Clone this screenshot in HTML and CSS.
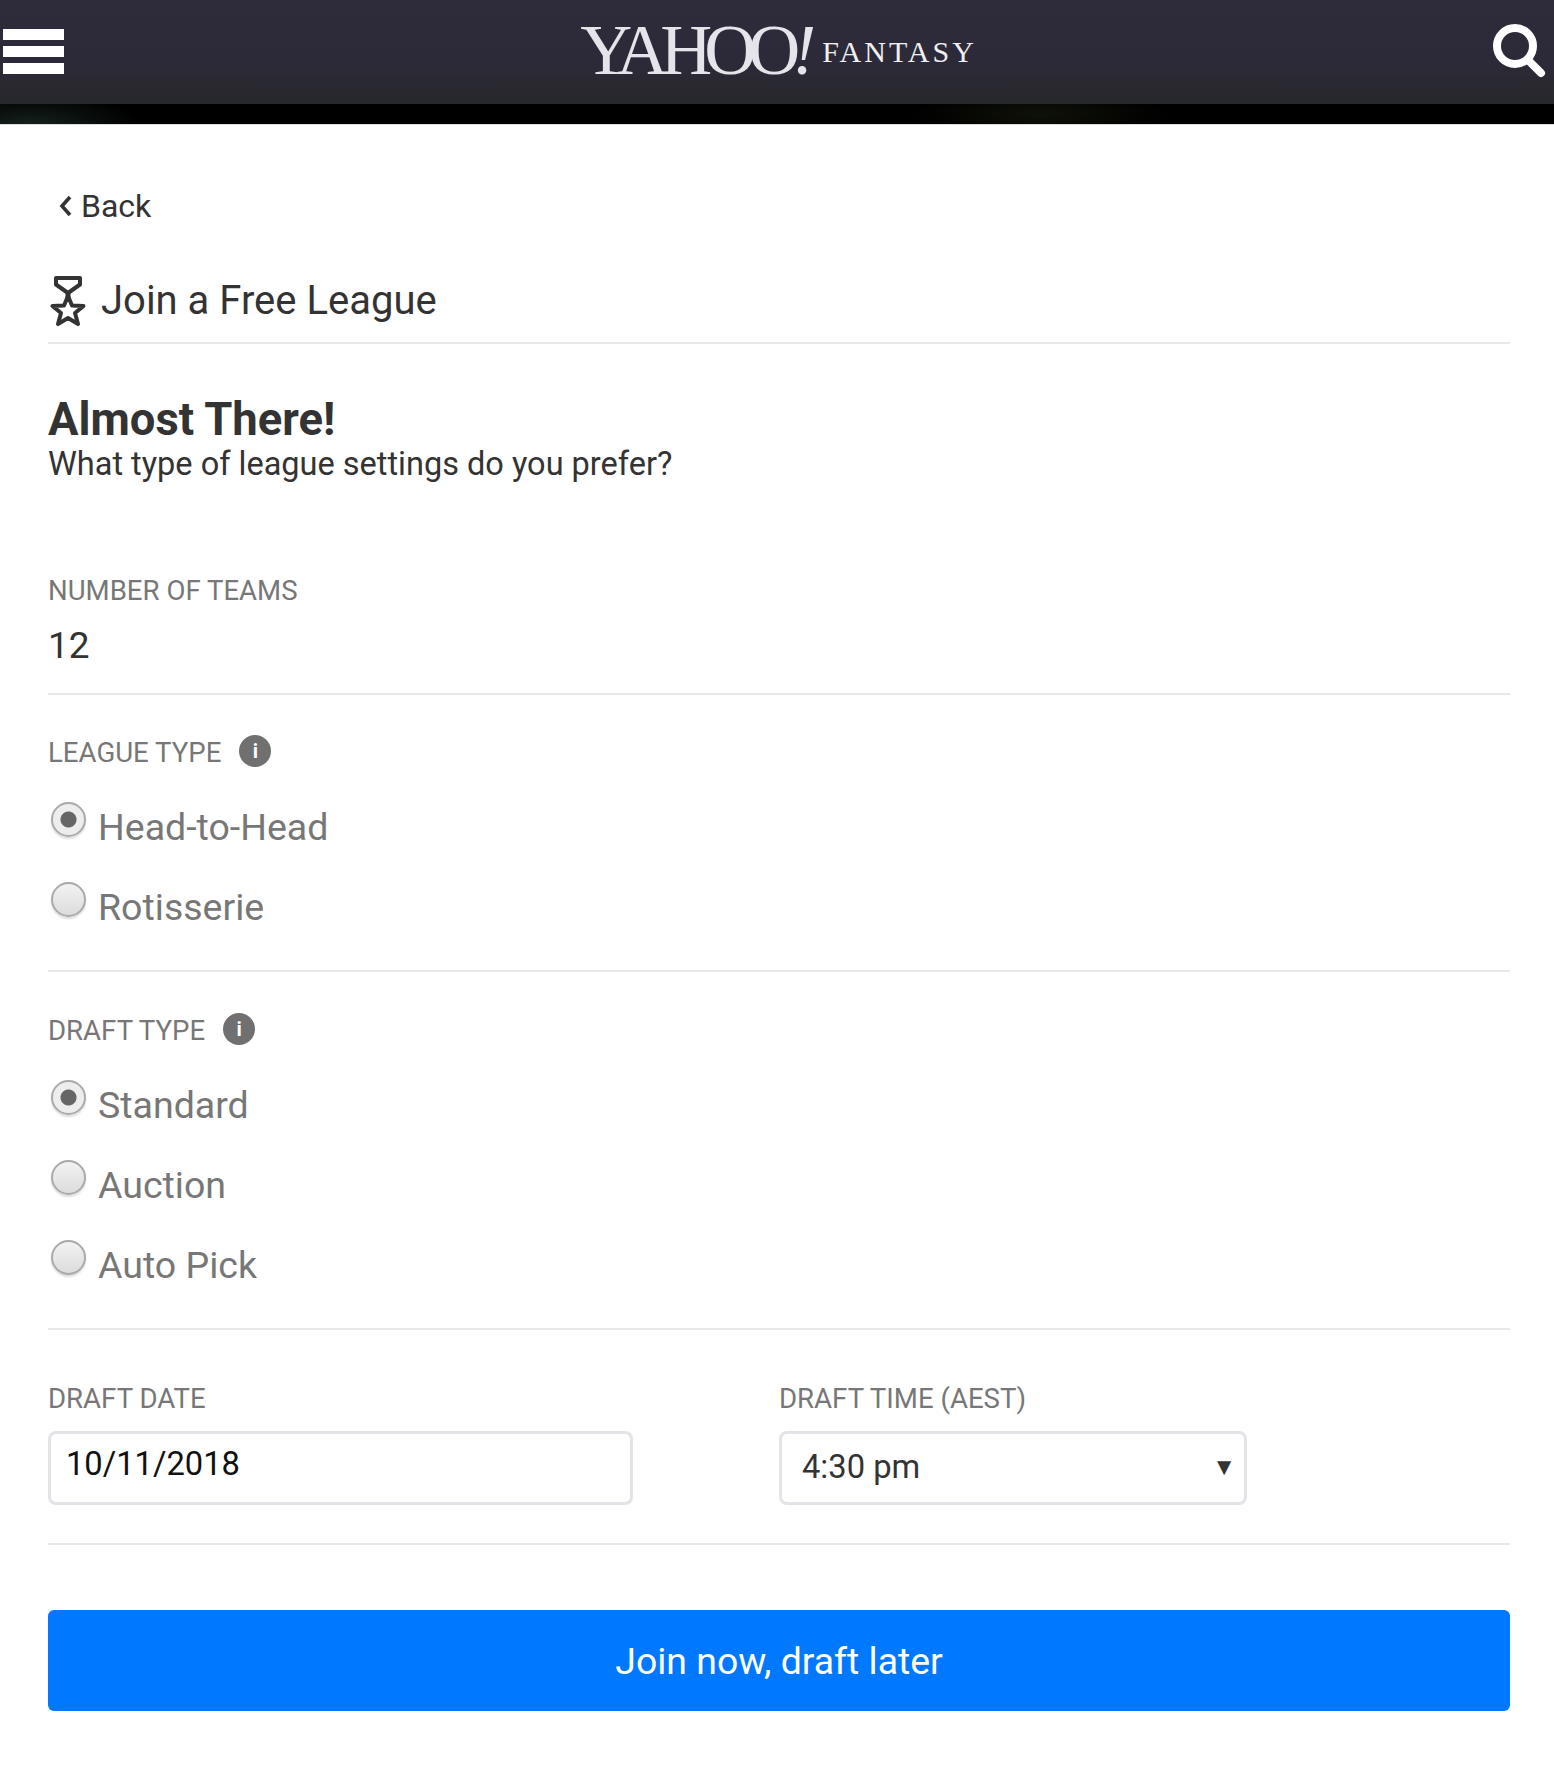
FILE: index.html
```html
<!DOCTYPE html>
<html lang="en">
<head>
<meta charset="utf-8">
<title>Join a Free League</title>
<link rel="stylesheet" href="styles.css">
</head>
<body>
<header class="topbar">
  <div class="menu"><span></span><span></span><span></span></div>
  <div class="logo"><span class="yahoo">YAHOO<i>!</i></span><span class="fantasy">FANTASY</span></div>
  <svg class="search" width="56" height="64" viewBox="0 0 56 64"><circle cx="24" cy="26" r="18" fill="none" stroke="#fff" stroke-width="8"/><path d="M37 40L50 53" stroke="#fff" stroke-width="8" stroke-linecap="round"/></svg>
</header>
<div class="band"></div>
<main class="content">
  <a class="back"><svg width="13" height="22" viewBox="0 0 13 22"><path d="M11 2L3 11l8 9" fill="none" stroke="#333" stroke-width="3.6"/></svg>Back</a>
  <div class="title">
    <svg width="36" height="52" viewBox="0 0 36 52"><path d="M6 3H30V9.500L18 18 6 9.500Z" fill="none" stroke="#333" stroke-width="4" stroke-linejoin="round"/><path d="M18 17V23" stroke="#333" stroke-width="5"/><path d="M18 21L22 30.500L33.500 31L25 38L28 49L18 43L8 49L11 38L2.500 31L14 30.500Z" fill="none" stroke="#333" stroke-width="4" stroke-linejoin="round"/></svg>
    <h1>Join a Free League</h1>
  </div>
  <h2>Almost There!</h2>
  <p class="sub">What type of league settings do you prefer?</p>

  <section class="row teams">
    <div class="label">NUMBER OF TEAMS</div>
    <div class="value">12</div>
  </section>

  <section class="row group">
    <div class="label">LEAGUE TYPE <span class="info">i</span></div>
    <label class="opt"><input type="radio" name="league" checked><span>Head-to-Head</span></label>
    <label class="opt"><input type="radio" name="league"><span>Rotisserie</span></label>
  </section>

  <section class="row group">
    <div class="label">DRAFT TYPE <span class="info">i</span></div>
    <label class="opt"><input type="radio" name="draft" checked><span>Standard</span></label>
    <label class="opt"><input type="radio" name="draft"><span>Auction</span></label>
    <label class="opt"><input type="radio" name="draft"><span>Auto Pick</span></label>
  </section>

  <section class="row dates">
    <div>
      <div class="label">DRAFT DATE</div>
      <div class="field date">10/11/2018</div>
    </div>
    <div>
      <div class="label">DRAFT TIME (AEST)</div>
      <div class="field time"><span>4:30 pm</span><em>▼</em></div>
    </div>
  </section>

  <button class="join">Join now, draft later</button>
</main>
</body>
</html>
```
FILE: styles.css
```css
* { box-sizing: border-box; }
html, body { margin: 0; padding: 0; background: #fff; }
body { font-family: Roboto, "Liberation Sans", sans-serif; color: #333; height: 1767px; overflow: hidden; }

.topbar {
  height: 104px;
  background: linear-gradient(#2e2b3b 0, #2c2a38 60%, #27282b 100%);
  display: flex;
  align-items: center;
  justify-content: space-between;
  padding: 0 0 0 3px;
}
.menu { width: 61px; display: flex; flex-direction: column; gap: 6px; margin-top: -2px; }
.menu span { display: block; height: 11px; background: #fff; }
.logo { display: flex; align-items: center; color: #e4e4ea; font-family: "Liberation Serif", serif; margin-left: 2px; }
.yahoo { font-size: 72px; letter-spacing: -8px; line-height: 100px; margin-top: -4px; }
.yahoo i { font-style: italic; letter-spacing: 0; }
.fantasy { font-size: 30px; letter-spacing: 3px; margin-left: 6px; color: #f0f0f3; }
.search { margin-right: 7px; flex: none; }

.band {
  height: 21px;
  background:
    radial-gradient(ellipse 110px 30px at 30px 20px, #14201d, transparent),
    radial-gradient(ellipse 130px 24px at 1040px 10px, #0f1208, transparent),
    #000;
  border-bottom: 1px solid #ddd;
}

.content { padding: 0 44px 0 48px; }

.back { display: flex; align-items: center; gap: 9px; font-size: 32px; line-height: 38px; margin: 62px 0 0 11px; color: #333; height: 38px; }
.title { display: flex; align-items: center; gap: 15px; margin-top: 49px; padding: 0 0 14px 2px; border-bottom: 2px solid #e8e8e8; height: 70px; }
.title svg { flex: none; }
.title h1 { font-size: 40px; font-weight: 400; margin: 0; line-height: 44px; }

h2 { font-size: 45.400px; font-weight: 700; margin: 51px 0 0; line-height: 50px; color: #333; }
.sub { font-size: 32.5px; line-height: 38px; margin: 0; color: #333; }

.row { border-bottom: 2px solid #e8e8e8; }
.label { font-size: 27.6px; line-height: 32px; color: #777; display: flex; align-items: center; gap: 18px; }
.info { width: 32px; height: 32px; border-radius: 50%; background: #707070; color: #fff; font-size: 20px; font-weight: 700; display: flex; align-items: center; justify-content: center; margin-top: -4px; }

.teams { margin-top: 92px; height: 120px; }
.value { font-size: 37px; line-height: 44px; margin-top: 17px; color: #333; }

.group { padding: 42px 0 23px; }
.group + .group { padding: 43px 0 23px; }
.group .label { margin-bottom: 18px; }
.opt { display: flex; align-items: center; height: 80px; gap: 12px; color: #777; font-size: 37.5px; margin-left: 3px; }
.opt input { appearance: none; -webkit-appearance: none; width: 35px; height: 35px; margin: -16px 0 0 0; border-radius: 50%; border: 2px solid #aaa; background: linear-gradient(#f2f2f2, #dcdcdc); box-shadow: 0 2px 2px #ddd; flex: none; }
.opt input:checked { background: radial-gradient(circle, #666 0, #666 7.500px, #ededed 8.500px); }
.opt span { line-height: 44px; }

.dates { display: grid; grid-template-columns: 50% 50%; padding-top: 53px; height: 215px; }
.field { height: 74px; margin-top: 16px; border: 3px solid #e4e4e8; border-radius: 8px; font-size: 32.7px; color: #111; }
.date { width: 585px; padding: 10px 0 0 15px; line-height: 40px; }
.time { width: 468px; display: flex; align-items: center; justify-content: space-between; padding: 0 8px 2px 20px; color: #333; }
.time em { font-style: normal; font-size: 24px; color: #333; }

.join { display: block; width: 100%; height: 101px; margin-top: 65px; border: 0; border-radius: 6px; background: #0078ff; color: #fff; font: 400 37.4px Roboto, sans-serif; }
```
